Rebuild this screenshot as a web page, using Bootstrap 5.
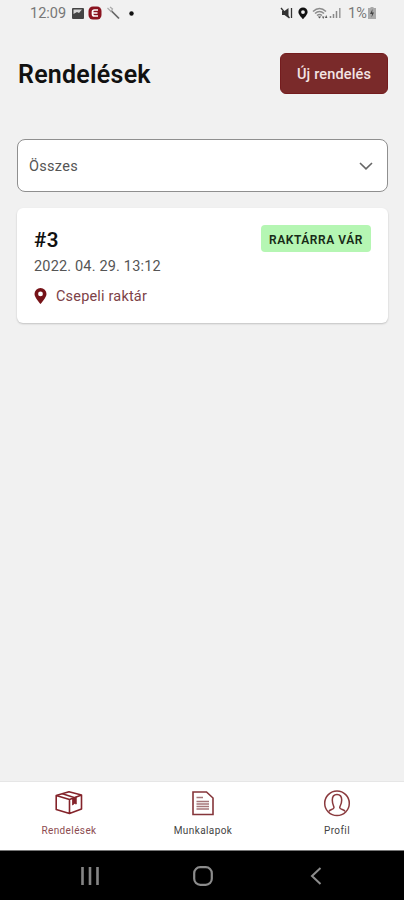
<!DOCTYPE html>
<html lang="hu">
<head>
<meta charset="utf-8">
<meta name="viewport" content="width=device-width, initial-scale=1">
<title>Rendelések</title>
<link href="https://cdn.jsdelivr.net/npm/bootstrap@5.3.0/dist/css/bootstrap.min.css" rel="stylesheet">
<style>
body { font-family: Roboto, "Liberation Sans", sans-serif; background: #f1f1f1; color: #111; overflow: hidden; }
svg { display: block; flex: none; }
.status-bar { height: 26px; padding: 0 28px 0 30px; color: #777; font-size: 14.5px; line-height: 26px; }
.clock { width: 42px; padding-top: 2px; }
.percent { width: 20px; margin-left: 6px; padding-top: 2px; white-space: nowrap; }
.page-head { padding: 27px 16px 0 18px; }
.page-title { font-size: 25px; font-weight: 600; line-height: 43px; height: 41px; letter-spacing: .25px; }
.btn-order, .btn-order:hover { width: 108px; height: 41px; padding: 2px 0 0; background: #7a2a2a; border: 1px solid #741c1e; border-radius: 6px; color: #f3e4e4; font-size: 14.5px; font-weight: 500; letter-spacing: .15px; }
.filter-box { margin: 45px 16px 0 17px; height: 53px; padding: 0 14px 0 11px; border: 1px solid #8f8f8f; border-radius: 8px; color: #555; font-size: 14.5px; letter-spacing: .3px; }
.filter-box span { padding-top: 2px; }
.order-card { margin: 16px 16px 0 17px; height: 115px; padding: 17px 17px 0 17px; border: 0; border-radius: 6px; box-shadow: 0 1px 2px rgba(0,0,0,.2); }
.order-no { font-size: 20.5px; font-weight: 600; line-height: 31px; letter-spacing: .6px; }
.order-state { width: 110px; height: 27px; padding-top: 2px; border-radius: 4px; background: #b5f6b3; color: #172b17; font-size: 12px; font-weight: 600; letter-spacing: .55px; }
.order-date { padding-top: 1px; font-size: 14.5px; line-height: 20px; letter-spacing: .17px; color: #555; }
.order-place { margin-top: 9px; font-size: 14.5px; line-height: 20px; letter-spacing: .18px; color: #7d4247; gap: 9px; }
.order-place span { padding-top: 1px; margin-bottom: -1px; }
.tab-row { height: 69px; padding-left: 2px; border-top: 1px solid #e6e6e6; }
.tab-item { padding-top: 8px; font-size: 10px; line-height: 12px; letter-spacing: .4px; color: #444; text-decoration: none; gap: 7px; }
.tab-item.current { color: #8c4b50; }
.sys-bar { height: 50px; background: #000; border-top: 1px solid #777; padding: 0 82px 0 81px; }
.home-key { margin-right: 3px; }
</style>
<script src="https://cdn.jsdelivr.net/npm/bootstrap@5.3.0/dist/js/bootstrap.bundle.min.js"></script>
</head>
<body>
<div class="d-flex flex-column vh-100">
  <div class="status-bar d-flex align-items-center">
    <span class="clock">12:09</span>
    <svg width="12" height="11" viewBox="0 0 12 11"><rect width="12" height="11" rx="1" fill="#444"/><path d="M1.500 1.500h8.500L7 5 5 4 1.500 6z" fill="#d5d5d5"/></svg>
    <svg class="ms-1" width="14" height="14" viewBox="0 0 14 14"><rect x=".5" y=".5" width="13" height="13" rx="4.500" fill="#8b1420"/><path d="M10 4H6.500Q4.500 4 4.500 6v2q0 2 2 2H10M5 7h4.500" fill="none" stroke="#fff" stroke-width="1.700"/></svg>
    <svg class="ms-1" width="15" height="14" viewBox="0 0 15 14"><path d="M5 4.500l8 8" stroke="#666" stroke-width="1.700"/><path d="M1.500 2l3.500 3.500L6.500 3 4 1" fill="none" stroke="#aaa" stroke-width="1.200"/></svg>
    <svg class="ms-2" width="5" height="5" viewBox="0 0 5 5"><circle cx="2.500" cy="2.500" r="2.200" fill="#111"/></svg>
    <svg class="ms-auto" width="13" height="12" viewBox="0 0 13 12"><path d="M2 4h2.500L8.500 1v10l-4-3H2z" fill="#333"/><path d="M1 1l8.500 10M11.500 1v10" stroke="#333" stroke-width="1.300"/></svg>
    <svg class="ms-1" width="11" height="13" viewBox="0 0 11 13"><path fill-rule="evenodd" d="M6 .5a4.600 4.600 0 0 1 4.600 4.600C10.600 8 6 12.200 6 12.200S1.400 8 1.400 5.100A4.600 4.600 0 0 1 6 .5zm0 2.700a1.900 1.900 0 1 0 0 3.800 1.900 1.900 0 0 0 0-3.800z" fill="#111"/></svg>
    <svg class="ms-1" width="17" height="13" viewBox="0 0 17 13"><path d="M1 4.500Q7.500-1.500 14 4.500M3 6.500Q7.500 2.500 12 6.500M5 8.500q2.500-2 5 0" fill="none" stroke="#8c8c8c" stroke-width="1.600"/><path d="M7.500 11.500L5.800 9.500h3.400zM10 9.500h2.400l-1.200 2.500zM13 11h2.400l-1.200-3z" fill="#555"/></svg>
    <svg width="13" height="12" viewBox="0 0 13 12"><path d="M1.500 9v2M4.500 7v4M7.500 4v7" stroke="#888" stroke-width="1.500"/><path d="M10.800 1v10" stroke="#999" stroke-width="1.500"/></svg>
    <span class="percent">1%</span>
    <svg width="8" height="12" viewBox="0 0 8 12"><path d="M2.500 0h3v1H8v11H0V1h2.500z" fill="#aaa"/><path d="M4.500 2L2 7h2l-.5 3.500L6 5.500H4.200z" fill="#444"/></svg>
  </div>

  <header class="page-head d-flex justify-content-between">
    <h1 class="page-title mb-0">Rendelések</h1>
    <button class="btn btn-order" type="button">Új rendelés</button>
  </header>

  <div class="filter-box bg-white d-flex align-items-center justify-content-between" role="button">
    <span>Összes</span>
    <svg width="14" height="8" viewBox="0 0 14 8"><path d="M1 1l6 5.800L13 1" fill="none" stroke="#666" stroke-width="1.600"/></svg>
  </div>

  <article class="card order-card">
    <div class="d-flex justify-content-between align-items-start">
      <div class="order-no">#3</div>
      <div class="order-state d-flex align-items-center justify-content-center">RAKTÁRRA VÁR</div>
    </div>
    <div class="order-date">2022. 04. 29. 13:12</div>
    <div class="order-place d-flex align-items-center">
      <svg width="13" height="17" viewBox="0 0 13 17"><path fill-rule="evenodd" d="M6.500 0a6 6 0 0 1 6 6c0 3.500-6 10-6 10s-6-6.500-6-10a6 6 0 0 1 6-6zm0 3.500a2.400 2.400 0 1 0 0 4.800 2.400 2.400 0 0 0 0-4.800z" fill="#761318"/></svg>
      <span>Csepeli raktár</span>
    </div>
  </article>

  <nav class="tab-row bg-white mt-auto row g-0 text-center">
    <a class="tab-item current col d-flex flex-column align-items-center" href="#">
      <svg width="28" height="28" viewBox="0 0 28 28" fill="none" stroke="#84232a" stroke-width="1.600" stroke-linejoin="round"><path d="M1.200 5.500L14 1.800 26.500 5v14L14.500 23.500 1.200 19.500zM1.200 5.500l13.300 3.900L26.500 5M14.500 9.400v14M7.500 3.800L19 7.500"/><path d="M17.500 8.500v6.500l2-1.500 1.800.5V7z" fill="#84232a" stroke-width=".8"/></svg>
      <span>Rendelések</span>
    </a>
    <a class="tab-item col d-flex flex-column align-items-center" href="#">
      <svg width="28" height="28" viewBox="0 0 28 28" fill="none" stroke="#85353a" stroke-width="1.600"><path d="M4 2h13.500l6.500 6V24.500H4z"/><path d="M7.500 7.500h6.500M7.500 11.500h12.500M7.500 14h12.500M7.500 16.500h12.500M7.500 19h12.500" stroke="#a57679" stroke-width="1.400"/></svg>
      <span>Munkalapok</span>
    </a>
    <a class="tab-item col d-flex flex-column align-items-center" href="#">
      <svg width="28" height="28" viewBox="0 0 28 28" fill="none" stroke="#8a3a3e" stroke-width="1.500"><circle cx="14" cy="13.300" r="12.300"/><path d="M6 21.500c.5-2.500 5-1.500 5-4 0-1.500-1.700-3-1.700-7.500C9.300 6.500 11 4.500 14 4.500s4.700 2 4.700 5.500c0 4.500-2 6-2 7.500 0 2.500 4.800 1.500 5.300 4"/></svg>
      <span>Profil</span>
    </a>
  </nav>

  <div class="sys-bar d-flex align-items-center justify-content-between">
    <svg width="18" height="18" viewBox="0 0 18 18"><path d="M1.500 0v18M9 0v18M16.500 0v18" stroke="#858585" stroke-width="2.600"/></svg>
    <svg class="home-key" width="20" height="20" viewBox="0 0 20 20"><rect x="1.200" y="1.200" width="17.600" height="17.600" rx="6" fill="none" stroke="#8c8c8c" stroke-width="2.200"/></svg>
    <svg width="12" height="18" viewBox="0 0 12 18"><path d="M10.500 1L2 9l8.500 8" fill="none" stroke="#8c8c8c" stroke-width="2"/></svg>
  </div>
</div>
</body>
</html>
